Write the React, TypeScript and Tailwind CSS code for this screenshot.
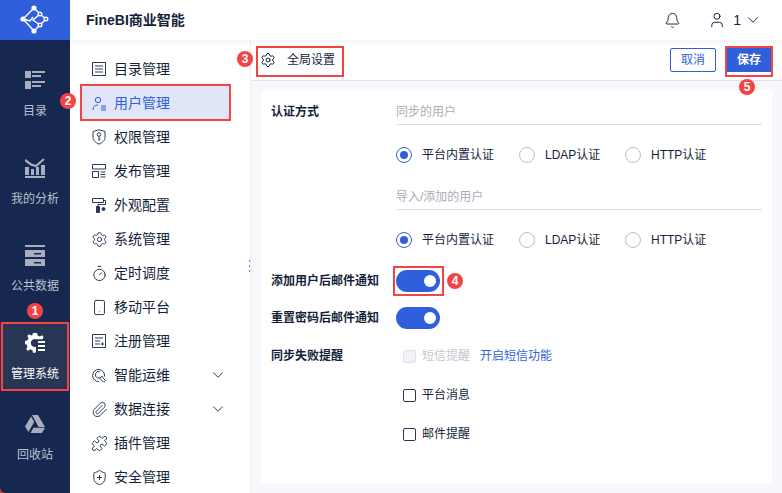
import { Bell, ChevronDown, Paperclip, Puzzle, Settings, ShieldPlus, Smartphone, Timer, User } from "lucide-react";
import type { ReactNode } from "react";

const font = "font-['Liberation_Sans','Noto_Sans_CJK_SC',sans-serif]";

function LogoMark() {
	return (
		<svg width="30" height="30" viewBox="0 0 30 30" fill="none" stroke="white" strokeWidth="1.4">
			<path d="M14 3 3 14l11 12M14 3l6 6 6 5-6 6-6 6M20 9l-7 6 7 5M3 14l7 2 3-4" />
			<circle cx="14" cy="3" r="2.6" fill="white" stroke="none" />
			<circle cx="3" cy="14" r="2.6" fill="white" stroke="none" />
			<circle cx="14" cy="26" r="2.6" fill="white" stroke="none" />
			<circle cx="20" cy="9" r="1.8" fill="#2f5fdb" />
			<circle cx="26" cy="14" r="1.8" fill="#2f5fdb" />
			<circle cx="20" cy="20" r="1.8" fill="#2f5fdb" />
		</svg>
	);
}

function CatalogIcon() {
	return (
		<svg width="20" height="18" viewBox="0 0 20 18" fill="#a8aebd">
			<path d="M0 0h6v7H0zM7 0h13v2H7zM7 4h9v2H7zM0 10h6v8H0zM7 10h13v2H7zM7 14h9v2H7z" />
		</svg>
	);
}

function AnalysisIcon() {
	return (
		<svg width="20" height="20" viewBox="0 0 20 20" fill="#a8aebd">
			<path d="M0 18h20v2H0zM0 9h4v8H0zM6 11h3v6H6zM11 9h3v8h-3zM16 7h4v10h-4z" />
			<path d="M0 2l6 4.5L11 8l8-7" fill="none" stroke="#a8aebd" strokeWidth="2.2" />
		</svg>
	);
}

function DataIcon() {
	return (
		<svg width="20" height="21" viewBox="0 0 20 21">
			<path fill="#a8aebd" d="M0 0h20v2H0zM0 5h20v7H0zM0 14h20v7H0z" />
			<path fill="#162850" d="M9 8h7v1.5H9zM9 17h7v1.5H9z" />
		</svg>
	);
}

function AdminIcon() {
	return (
		<svg width="20" height="20" viewBox="0 0 20 20" fill="white">
			<path d="M8 0h4l.6 2.6 2.2.9L17 2.2l1.6 1.7-1 2.3H11a4 4 0 1 0 0 7.6v3.8l-.5 2.2H8l-.6-2.6-2.3-1L2.9 18 1.2 16l1.3-2.300-.9-2.200L0 11V8l2.600-.7.9-2.200L2.200 3 4 1.300l2.200 1.300 1.200-.5z" />
			<path d="M13 8h7v2h-7zM13 12h7v2h-7zM13 16h7v2h-7z" />
		</svg>
	);
}

function TrashIcon() {
	return (
		<svg width="20" height="18" viewBox="0 0 20 18" fill="#a8aebd">
			<path d="M7 0h6l7 12h-6.400zM6 1.500 9.200 7 3.400 17 0 11.500zM5.500 18l3-5.200H20L17 18z" />
		</svg>
	);
}

function ListIcon() {
	return (
		<svg width="14" height="14" viewBox="0 0 14 14" fill="none" stroke="currentColor">
			<path d="M.5 .5h13v13H.5zM3 4h8M3 7h8M3 10h8" />
		</svg>
	);
}

function UserListIcon() {
	return (
		<svg width="14" height="15" viewBox="0 0 14 15" fill="none" stroke="currentColor">
			<circle cx="6" cy="4" r="2.700" />
			<path d="M1 14c0-3 1.500-5 5-5M9 10h5M9 12h5M9 14h5" />
		</svg>
	);
}

function KeyShieldIcon() {
	return (
		<svg width="14" height="16" viewBox="0 0 14 16" fill="none" stroke="currentColor">
			<path d="M7 .8 13 2.500v6c0 3-2.500 5-6 6.700-3.500-1.700-6-3.700-6-6.700v-6z" />
			<circle cx="7" cy="5.500" r="1.800" />
			<path d="M7 7.300V12M7 10h1.500" />
		</svg>
	);
}

function PublishIcon() {
	return (
		<svg width="14" height="14" viewBox="0 0 14 14" fill="none" stroke="currentColor">
			<path d="M.5 .5h13v4.500H.5zM.5 7.500h6v6h-6zM8.500 8h5M8.500 10.500h5M8.500 13h5" />
		</svg>
	);
}

function RollerIcon() {
	return (
		<svg width="14" height="15" viewBox="0 0 14 15" fill="none" stroke="currentColor">
			<path d="M.5 .5h11v4H.5zM11.500 2.500h2v4H6v2" />
			<path d="M4.500 8.500h3v6h-3z" fill="currentColor" />
			<circle cx="11.500" cy="11" r="1.500" fill="currentColor" />
		</svg>
	);
}

function RegisterIcon() {
	return (
		<svg width="14" height="14" viewBox="0 0 14 14" fill="none" stroke="currentColor">
			<path d="M.5 .5h13v13H.5zM3 4h8M3 7h5M3 10h5M9 10h3M10.500 8.500v3" />
		</svg>
	);
}

function WrenchSearchIcon() {
	return (
		<svg width="15" height="15" viewBox="0 0 15 15" fill="none" stroke="currentColor">
			<path d="M12.500 8.500A6 6 0 1 0 7 13.500M8 3.800a3.300 3.300 0 1 0 1.800 4.300l3.500 4.400-1.600 1.700-4-4" />
		</svg>
	);
}

type MenuItem = { label: string; icon: ReactNode; active?: boolean; more?: boolean };

const menu: MenuItem[] = [
	{ label: "目录管理", icon: <ListIcon /> },
	{ label: "用户管理", icon: <UserListIcon />, active: true },
	{ label: "权限管理", icon: <KeyShieldIcon /> },
	{ label: "发布管理", icon: <PublishIcon /> },
	{ label: "外观配置", icon: <RollerIcon /> },
	{ label: "系统管理", icon: <Settings size={17} strokeWidth={1.4} className="-ml-px" /> },
	{ label: "定时调度", icon: <Timer size={17} strokeWidth={1.4} className="-ml-px" /> },
	{ label: "移动平台", icon: <Smartphone size={17} strokeWidth={1.4} className="-ml-px" /> },
	{ label: "注册管理", icon: <RegisterIcon /> },
	{ label: "智能运维", icon: <WrenchSearchIcon />, more: true },
	{ label: "数据连接", icon: <Paperclip size={17} strokeWidth={1.4} className="-ml-px" />, more: true },
	{ label: "插件管理", icon: <Puzzle size={17} strokeWidth={1.4} className="-ml-px" /> },
	{ label: "安全管理", icon: <ShieldPlus size={17} strokeWidth={1.4} className="-ml-px" /> },
];

function RailItem({ label, icon, className }: { label: string; icon: ReactNode; className: string }) {
	return (
		<div className={`h-[66px] flex flex-col items-center text-xs text-[#bcc2ce] ${className}`}>
			<div className="h-10 flex items-center">{icon}</div>
			<span className="mt-px leading-5">{label}</span>
		</div>
	);
}

function Radio({ label, on, className }: { label: string; on?: boolean; className: string }) {
	return (
		<div className={`flex items-center gap-[10px] shrink-0 ${className}`}>
			<span
				className={`size-4 rounded-full border grid place-items-center ${on ? "border-[#2f5fdb]" : "border-[#b8bdc9]"}`}
			>
				{on && <span className="size-2 rounded-full bg-[#2f5fdb]" />}
			</span>
			<span>{label}</span>
		</div>
	);
}

function RadioRow({ className }: { className: string }) {
	return (
		<div className={`flex items-center h-4 ${className}`}>
			<Radio label="平台内置认证" on className="w-[123px]" />
			<Radio label="LDAP认证" className="w-[106px]" />
			<Radio label="HTTP认证" className="" />
		</div>
	);
}

function Toggle() {
	return (
		<span className="w-11 h-[22px] rounded-full bg-[#2f5fdb] flex items-center justify-end pr-[4px] shrink-0">
			<span className="size-3 rounded-full bg-white" />
		</span>
	);
}

function Check({ label, className }: { label: string; className: string }) {
	return (
		<div className={`flex items-center gap-[6px] pl-[7px] ${className}`}>
			<span className="size-[13px] rounded-[2px] border border-[#2c3650] bg-white" />
			<span>{label}</span>
		</div>
	);
}

function Badge({ n, className }: { n: number; className: string }) {
	return (
		<span
			className={`absolute size-4 rounded-full bg-[#f44345] text-white text-xs font-bold leading-none grid place-items-center ${className}`}
		>
			{n}
		</span>
	);
}

function Mark({ className }: { className: string }) {
	return <div className={`absolute border-2 border-[#f44345] pointer-events-none ${className}`} />;
}

export default function App() {
	return (
		<div className={`${font} relative w-[782px] h-[493px] overflow-hidden flex bg-[#b5482f] text-xs text-[#141f3a]`}>
			<aside className="w-[70px] shrink-0 bg-[#162850] rounded-bl-[6px] flex flex-col">
				<div className="h-10 bg-[#2f5fdb] grid place-items-center">
					<LogoMark />
				</div>
				<RailItem label="目录" icon={<CatalogIcon />} className="mt-5" />
				<RailItem label="我的分析" icon={<AnalysisIcon />} className="mt-[22px]" />
				<RailItem label="公共数据" icon={<DataIcon />} className="mt-[21px]" />
				<RailItem label="管理系统" icon={<AdminIcon />} className="mt-[22px] bg-[#283655] text-white" />
				<RailItem label="回收站" icon={<TrashIcon />} className="mt-[15px]" />
			</aside>

			<div className="flex-1 flex flex-col min-w-0 bg-white">
				<header className="h-10 shrink-0 flex items-center justify-between pl-[16px] pr-[20px] shadow-[0_2px_6px_rgba(30,40,70,0.06)] z-10 relative bg-white">
					<span className="text-sm font-bold">FineBI商业智能</span>
					<div className="flex items-center">
						<Bell size={17} strokeWidth={1.3} />
						<User size={18} strokeWidth={1.3} className="ml-[27px]" />
						<span className="ml-[7px] text-sm">1</span>
						<ChevronDown size={18} strokeWidth={1.3} className="ml-[3px]" />
					</div>
				</header>

				<div className="flex-1 flex min-h-0">
					<nav className="relative w-[180px] shrink-0 bg-white pt-3 pl-[11px] pr-[20px]">
						{menu.map((item) => (
							<div
								key={item.label}
								className={`h-[34px] flex items-center text-sm ${item.active ? "bg-[#e0e6f8] text-[#2f5fdb]" : ""}`}
							>
								<span className={`w-[33px] pl-[11px] shrink-0 ${item.active ? "" : "text-[#2c3a57]"}`}>{item.icon}</span>
								<span className="flex-1">{item.label}</span>
								{item.more && <ChevronDown size={18} strokeWidth={1.3} className="mr-[3px] text-[#2c3a57]" />}
							</div>
						))}
						<div className="absolute right-0 top-[220px] flex flex-col gap-[3px]">
							<span className="w-px h-[2px] bg-[#7d8aa5]" />
							<span className="w-px h-[2px] bg-[#7d8aa5]" />
							<span className="w-px h-[2px] bg-[#7d8aa5]" />
						</div>
					</nav>

					<main className="flex-1 flex flex-col min-w-0 bg-[#f7f8fc] border-l border-[#eef0f5]">
						<div className="h-[41px] shrink-0 bg-white border-b border-[#dfe2ea] flex items-center pl-[9px] pr-[11px]">
							<Settings size={16} strokeWidth={1.5} />
							<span className="ml-[11px]">全局设置</span>
							<button className="ml-auto w-[46px] h-6 border border-[#2f5fdb] rounded-[2px] text-[#2f5fdb]">取消</button>
							<button className="ml-[11px] w-[44px] h-6 bg-[#2f5fdb] text-white font-bold">保存</button>
						</div>

						<div className="mt-[9px] mx-[10px] mb-[10px] flex-1 bg-white px-[10px] pt-[10px]">
							<div className="flex">
								<span className="w-[125px] shrink-0 font-bold leading-[24px]">认证方式</span>
								<div className="flex-1">
									<div className="h-[25px] border-b border-[#dcdfe6] text-[#a9aeb9] leading-[24px]">同步的用户</div>
									<RadioRow className="mt-[22px]" />
									<div className="mt-[22px] h-[25px] border-b border-[#dcdfe6] text-[#a9aeb9] leading-[24px]">导入/添加的用户</div>
									<RadioRow className="mt-[22px]" />
								</div>
							</div>
							<div className="flex items-center mt-[22px]">
								<span className="w-[125px] shrink-0 font-bold">添加用户后邮件通知</span>
								<Toggle />
							</div>
							<div className="flex items-center mt-[15px]">
								<span className="w-[125px] shrink-0 font-bold">重置密码后邮件通知</span>
								<Toggle />
							</div>
							<div className="flex mt-[20px] h-[14px] items-center">
								<span className="w-[125px] shrink-0 font-bold">同步失败提醒</span>
								<div className="flex items-center gap-[6px] pl-[7px]">
									<span className="size-[13px] rounded-[2px] border border-[#dfe2e8] bg-[#f1f2f6]" />
									<span className="text-[#c4c7cf]">短信提醒</span>
									<span className="ml-[4px] text-[#2f5fdb]">开启短信功能</span>
								</div>
							</div>
							<Check label="平台消息" className="ml-[125px] mt-[25px] h-[14px]" />
							<Check label="邮件提醒" className="ml-[125px] mt-[25px] h-[14px]" />
						</div>
					</main>
				</div>
			</div>

			<Mark className="left-[1px] top-[322px] w-[68px] h-[69px]" />
			<Mark className="left-[80px] top-[84px] w-[151px] h-[37px]" />
			<Mark className="left-[256px] top-[46px] w-[88px] h-[31px]" />
			<Mark className="left-[725px] top-[46px] w-[48px] h-[31px]" />
			<Mark className="left-[393px] top-[266px] w-[51px] h-[30px]" />
			<Badge n={1} className="left-[27px] top-[303px]" />
			<Badge n={2} className="left-[60px] top-[93px]" />
			<Badge n={3} className="left-[237px] top-[51px]" />
			<Badge n={4} className="left-[447px] top-[273px]" />
			<Badge n={5} className="left-[739px] top-[79px]" />
		</div>
	);
}
